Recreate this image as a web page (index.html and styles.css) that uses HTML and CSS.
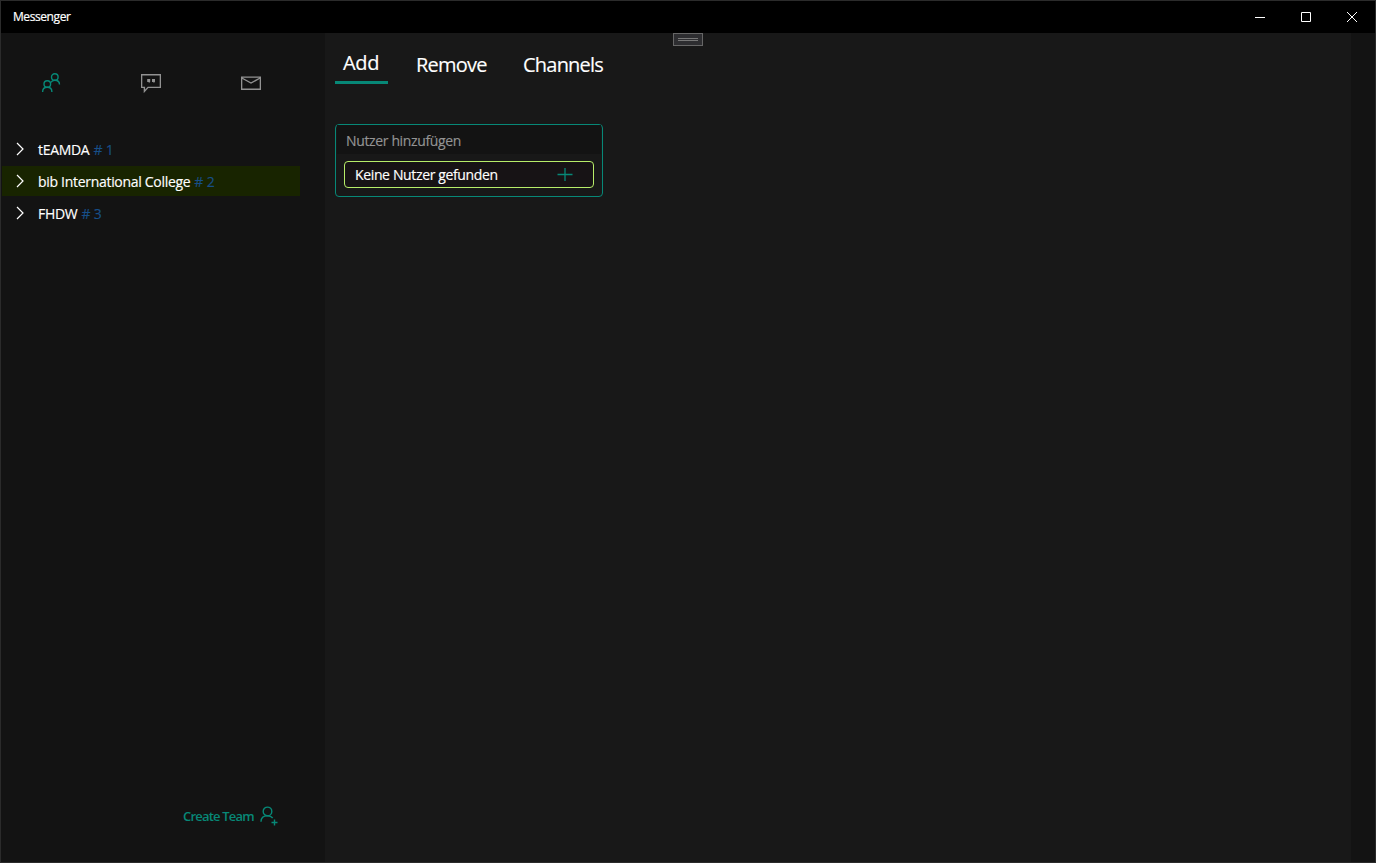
FILE: index.html
```html
<!DOCTYPE html>
<html lang="de">
<head>
<meta charset="utf-8">
<title>Messenger</title>
<link rel="stylesheet" href="styles.css">
</head>
<body>
<div class="window">
  <header class="titlebar">
    <span class="app-name">Messenger</span>
    <div class="controls">
      <svg viewBox="0 0 46 32"><path d="M18 16.500h10"/></svg>
      <svg viewBox="0 0 46 32"><path d="M18.500 11.500h9v9h-9z"/></svg>
      <svg viewBox="0 0 46 32"><path d="M18 11l10 10M28 11l-10 10"/></svg>
    </div>
    <div class="debug-handle"><i></i><i></i></div>
  </header>
  <div class="body">
    <aside class="sidebar">
      <nav class="nav">
        <svg class="active" viewBox="0 0 20 20"><circle cx="13.800" cy="4" r="3.300"/><circle cx="6.300" cy="11" r="3.300"/><path d="M1.600 19c0-3 1.900-4.700 4.700-4.700s4.600 1.700 4.600 4.700M9.800 9.500c.8-1.400 2.200-2.200 4-2.200 2.800 0 4.700 1.700 4.700 4.200"/></svg>
        <svg viewBox="0 0 20 20"><path d="M.6 1.700h18.800v12.700H7l-3.600 4v-4H.6z"/><path class="solid" d="M6.200 6h3v2.700L7.800 10.300V8.900H6.200zM11 6h3v2.700l-1.400 1.600V8.900H11z"/></svg>
        <svg viewBox="0 0 20 20"><path d="M.6 4.100h18.800v12.100H.6zM.8 5l9.200 5 9.200-5"/></svg>
      </nav>
      <ul class="teams">
        <li><svg viewBox="0 0 8 14"><path d="M1 1l6 6-6 6"/></svg><span class="team">tEAMDA</span><span class="num">#&nbsp;1</span></li>
        <li class="selected"><svg viewBox="0 0 8 14"><path d="M1 1l6 6-6 6"/></svg><span class="team">bib International College</span><span class="num">#&nbsp;2</span></li>
        <li><svg viewBox="0 0 8 14"><path d="M1 1l6 6-6 6"/></svg><span class="team">FHDW</span><span class="num">#&nbsp;3</span></li>
      </ul>
      <div class="create"><span>Create Team</span>
        <svg viewBox="0 0 20 20"><circle cx="8.500" cy="5.400" r="4.300"/><path d="M2 15.800c0-3.800 2.600-6.100 6.500-6.100 2.200 0 4 .8 5.200 2.300M12.500 16.500h6M15.500 13.500v6"/></svg>
      </div>
    </aside>
    <main class="main">
      <div class="tabs"><span class="tab current">Add</span><span class="tab remove">Remove</span><span class="tab channels">Channels</span></div>
      <section class="card">
        <div class="card-head"><span>Nutzer hinzufügen</span></div>
        <div class="result"><span>Keine Nutzer gefunden</span><svg viewBox="0 0 16 16"><path d="M.5 7.500h15M8 1v13"/></svg></div>
      </section>
    </main>
    <div class="gutter"></div>
  </div>
</div>
</body>
</html>
```
FILE: styles.css
```css
* { box-sizing: border-box; }
body { margin: 0; background: #131313; font-family: "Segoe UI", "Open Sans", "Noto Sans", sans-serif; color: #fff; }
svg { display: block; flex: none; fill: none; stroke: currentColor; }
span { white-space: nowrap; }
.window { width: 1376px; height: 863px; border: 1px solid #2b2b2b; display: flex; flex-direction: column; }
.titlebar { position: relative; height: 32px; flex: none; background: #000; display: flex; justify-content: space-between; padding-left: 12px; }
.app-name { font-size: 12px; line-height: 32px; letter-spacing: -.42px; -webkit-text-stroke: .2px; }
.controls { display: flex; }
.controls svg { width: 46px; height: 32px; }
.debug-handle { position: absolute; left: 672px; top: 32px; width: 30px; height: 13px; border: 1px solid #666; background: #2d2d30; padding: 4px; display: flex; flex-direction: column; gap: 1px; }
.debug-handle i { height: 1px; background: #777; }
.body { flex: 1; display: flex; }
.sidebar { width: 324px; background: #131313; display: flex; flex-direction: column; }
.nav { display: flex; gap: 80px; padding: 40px 0 0 40px; color: #929292; }
.nav svg { width: 20px; height: 20px; stroke-width: 1.4; }
.nav .active { color: #078877; }
.nav .solid { fill: currentColor; stroke: none; }
.teams { list-style: none; margin: 41px 0 0; padding: 0 0 0 1px; display: flex; flex-direction: column; gap: 2px; }
.teams li { width: 298px; height: 30px; display: flex; align-items: center; padding-left: 14px; font-size: 14px; line-height: 30px; }
.teams li span { padding-top: 2px; }
.teams svg { width: 8px; height: 14px; margin-right: 14px; stroke-width: 1.2; }
.teams .selected { background: #182400; }
.team { letter-spacing: -.3px; -webkit-text-stroke: .15px; }
.num { color: #174f88; margin-left: 4px; letter-spacing: -.2px; -webkit-text-stroke: .15px; }
.create { margin: auto 0 35px 182px; height: 22px; display: flex; align-items: center; color: #078877; font-size: 13px; font-weight: 600; letter-spacing: -.8px; }
.create svg { width: 20px; height: 20px; margin-left: 5px; stroke-width: 1.4; }
.main { flex: 1; background: #181818; padding-left: 10px; }
.tabs { display: flex; align-items: flex-start; padding-top: 13px; font-size: 20px; line-height: 38px; height: 91px; }
.tab { letter-spacing: -.78px; -webkit-text-stroke: .15px; }
.tab.current { width: 53px; height: 38px; line-height: 34px; padding-left: 8px; border-bottom: 3px solid #078877; letter-spacing: -.3px; }
.tab.remove { margin-left: 28px; width: 71px; }
.tab.channels { margin-left: 36px; }
.card { width: 268px; height: 73px; border: 1px solid #078877; border-radius: 4px; }
.card-head { height: 29px; margin: 0 1px; background: #131313; padding: 0 0 0 9px; color: #949494; font-size: 14px; line-height: 31px; letter-spacing: -.36px; -webkit-text-stroke: .15px; }
.result { width: 250px; height: 27px; margin: 7px 0 0 8px; border: 1px solid #b7ed69; border-radius: 4px; background: #171315; display: flex; align-items: center; justify-content: space-between; padding: 0 20px 0 10px; font-size: 14px; letter-spacing: -.36px; -webkit-text-stroke: .15px; }
.result svg { width: 16px; height: 16px; color: #078877; stroke-width: 1.3; }
.gutter { width: 24px; background: #131313; }
```
